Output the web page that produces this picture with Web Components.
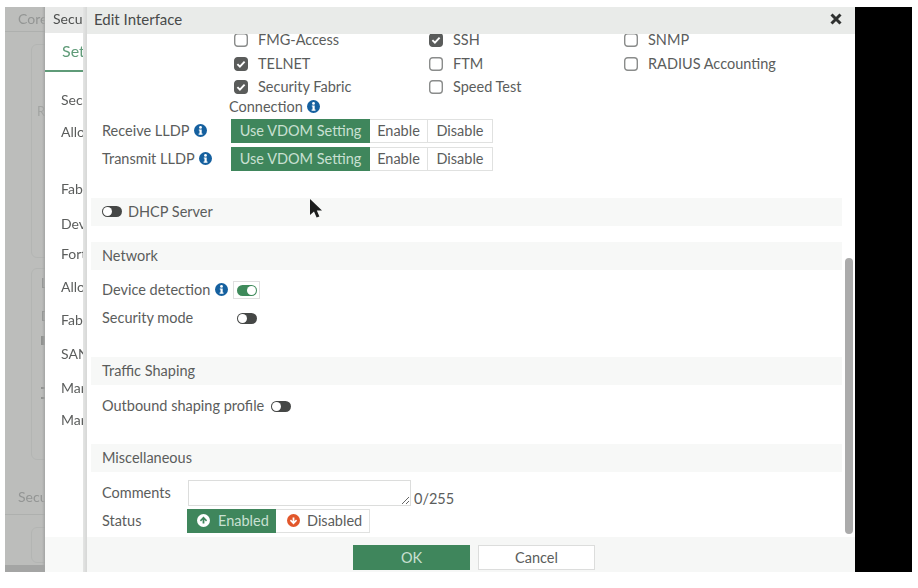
<!DOCTYPE html>
<html>
<head>
<meta charset="utf-8">
<title>Edit Interface</title>
<style>
  html, body { margin: 0; background: #fff; }
  body { font: 14.5px Lato, "Liberation Sans", sans-serif; color: #5b5d5c; }
</style>
</head>
<body>
<fgt-screen>
  <fgt-backdrop slot="back"></fgt-backdrop>
  <fgt-sidepanel slot="side"></fgt-sidepanel>
  <fgt-dialog slot="dialog" heading="Edit Interface">
    <fgt-checks>
      <fgt-check>FMG-Access</fgt-check>
      <fgt-check checked>SSH</fgt-check>
      <fgt-check>SNMP</fgt-check>
      <fgt-check checked>TELNET</fgt-check>
      <fgt-check>FTM</fgt-check>
      <fgt-check>RADIUS Accounting</fgt-check>
      <fgt-check checked>Security Fabric Connection <fgt-info></fgt-info></fgt-check>
      <fgt-check>Speed Test</fgt-check>
    </fgt-checks>

    <fgt-row label-width="129" gap="2" height="24">
      <span slot="label">Receive LLDP <fgt-info></fgt-info></span>
      <fgt-segment options="Use VDOM Setting:139|Enable:58|Disable:65"></fgt-segment>
    </fgt-row>
    <fgt-row label-width="129" gap="4" height="24">
      <span slot="label">Transmit LLDP <fgt-info></fgt-info></span>
      <fgt-segment options="Use VDOM Setting:139|Enable:58|Disable:65"></fgt-segment>
    </fgt-row>

    <fgt-band gap="27"><fgt-toggle></fgt-toggle><span>DHCP Server</span></fgt-band>

    <fgt-band gap="16">Network</fgt-band>
    <fgt-row label-width="131" gap="11" height="18">
      <span slot="label">Device detection <fgt-info></fgt-info></span>
      <fgt-toggle on boxed></fgt-toggle>
    </fgt-row>
    <fgt-row label-width="135" gap="10" height="18">
      <span slot="label">Security mode</span>
      <fgt-toggle></fgt-toggle>
    </fgt-row>

    <fgt-band gap="30">Traffic Shaping</fgt-band>
    <fgt-row label-width="169" gap="12" height="18">
      <span slot="label">Outbound shaping profile</span>
      <fgt-toggle></fgt-toggle>
    </fgt-row>

    <fgt-band gap="29">Miscellaneous</fgt-band>
    <fgt-row label-width="86" gap="8" height="26">
      <span slot="label">Comments</span>
      <fgt-comment limit="255"></fgt-comment>
    </fgt-row>
    <fgt-row label-width="85" gap="3" height="24">
      <span slot="label">Status</span>
      <fgt-status></fgt-status>
    </fgt-row>

    <fgt-button slot="footer" primary>OK</fgt-button>
    <fgt-button slot="footer">Cancel</fgt-button>
  </fgt-dialog>
  <fgt-cursor slot="cursor"></fgt-cursor>
</fgt-screen>

<script>
class Screen extends HTMLElement {
  constructor() {
    super();
    this.attachShadow({ mode: "open" });
    this.shadowRoot.innerHTML = `
      <style>
        :host { display: block; padding: 7px 6px 16px 5px; }
        #frame { position: relative; display: flex; height: 565px; overflow: hidden; filter: blur(0.55px); }
        #edge { width: 57px; flex: none; background: #000; }
        #cursor { position: absolute; left: 304px; top: 192px; }
        ::slotted([slot=dialog]) { flex: 1; min-width: 0; }
      </style>
      <div id="frame">
        <slot name="back"></slot>
        <slot name="side"></slot>
        <slot name="dialog"></slot>
        <div id="edge"></div>
        <div id="cursor"><slot name="cursor"></slot></div>
      </div>
    `;
  }
}

class Backdrop extends HTMLElement {
  constructor() {
    super();
    this.attachShadow({ mode: "open" });
    this.shadowRoot.innerHTML = `
      <style>
        :host { display: flex; flex-direction: column; flex: none; position: relative; width: 40px; height: 100%; overflow: hidden; background: #bcbdbb; color: #939594; font-size: 14px; }
        header { height: 25px; line-height: 24px; padding-left: 13px; border-bottom: 1px solid #aeb0ae; box-sizing: border-box; white-space: nowrap; }
        .card { margin-left: 26px; width: 40px; box-sizing: border-box; border: 1px solid #b3b5b3; border-radius: 6px; color: #a2a4a2; font-size: 13px; }
        .one { margin-top: 12px; height: 214px; padding: 58px 0 0 5px; }
        .two { margin-top: 10px; height: 192px; padding: 6px 0 0 9px; color: #8b8d8c; }
        .two div { height: 33px; }
        .two i { display: block; width: 5px; background: #8f918f; }
        .two i.block { height: 9px; margin: -5px 0 42px; }
        .two i.tick { height: 2px; margin-bottom: 8px; }
        h4 { margin: 27px 0 0; height: 28px; font: inherit; line-height: 20px; padding-left: 13px; border-bottom: 1px solid #aeb0ae; box-sizing: border-box; }
        .three { margin-top: 12px; height: 36px; }
        footer { margin-top: auto; height: 7px; background: #a4a5a4; }
        #shade { position: absolute; right: 0; top: 0; bottom: 0; width: 3px; background: linear-gradient(to right, transparent, #a3a4a3); }
      </style>
      <header>Core</header>
      <div class="card one">R</div>
      <div class="card two"><div>L</div><div>D</div><i class="block"></i><i class="tick"></i><i class="tick"></i></div>
      <h4>Secu</h4>
      <div class="card three"></div>
      <footer></footer>
      <div id="shade"></div>
    `;
  }
}

class SidePanel extends HTMLElement {
  constructor() {
    super();
    this.attachShadow({ mode: "open" });
    const gaps = [["Secu", 18], ["Allo", 12], ["Fab", 37], ["Dev", 15], ["Fort", 10], ["Allo", 13], ["Fab", 13], ["SAN", 14], ["Mar", 14], ["Mar", 12]];
    this.shadowRoot.innerHTML = `
      <style>
        :host { display: flex; flex-direction: column; flex: none; position: relative; width: 42px; height: 100%; overflow: hidden; background: #fff; color: #5b5d5c; font-size: 14px; }
        header { height: 26px; line-height: 24px; padding-left: 8px; background: #e8e9e8; color: #4e504f; white-space: nowrap; }
        #tab { height: 39px; box-sizing: border-box; padding: 8px 0 0 17px; border-bottom: 2px solid #5f9b78; color: #5f9b78; font-size: 16px; line-height: 20px; }
        p { margin: 0; padding-left: 16px; line-height: 20px; white-space: nowrap; }
        footer { margin-top: auto; height: 35px; background: #f8f9f8; }
        #shade { position: absolute; right: 0; top: 0; bottom: 0; width: 4px; background: linear-gradient(to right, #e4e5e4, #d6d7d6); }
      </style>
      <header>Secur</header>
      <div id="tab">Set</div>
      ${gaps.map(([t, g]) => `<p style="margin-top:${g}px">${t}</p>`).join("")}
      <footer></footer>
      <div id="shade"></div>
    `;
  }
}

class Dialog extends HTMLElement {
  constructor() {
    super();
    this.attachShadow({ mode: "open" });
    this.shadowRoot.innerHTML = `
      <style>
        :host { display: flex; flex-direction: column; height: 100%; background: #fff; }
        header { position: relative; z-index: 1; display: flex; align-items: center; justify-content: space-between; flex: none; height: 27px; box-sizing: border-box; padding: 0 13px 4px 7px; background: #e9ebe9; color: #484a49; font-size: 15px; }
        #main { flex: 1; min-height: 0; display: flex; overflow: hidden; }
        #scroll { flex: 1; min-width: 0; }
        #gutter { flex: none; width: 8px; padding: 0 2px 0 3px; }
        #thumb { margin-top: 224px; height: 276px; border-radius: 4px; background: #ababab; }
        footer { display: flex; justify-content: center; gap: 8px; flex: none; height: 35px; box-sizing: border-box; padding: 8px 0 2px 6px; background: #f6f7f6; }
      </style>
      <header>
        <span id="title"></span>
        <svg width="12" height="12" viewBox="0 0 12 12"><path d="M1.5 1.5l9 9m0-9l-9 9" stroke="#2f3130" stroke-width="3" fill="none"/></svg>
      </header>
      <div id="main">
        <div id="scroll"><slot></slot></div>
        <div id="gutter"><div id="thumb"></div></div>
      </div>
      <footer><slot name="footer"></slot></footer>
    `;
    this.shadowRoot.querySelector("#title").textContent = this.getAttribute("heading");
  }
}

class Checks extends HTMLElement {
  constructor() {
    super();
    this.attachShadow({ mode: "open" });
    this.shadowRoot.innerHTML = `
      <style>
        :host { display: grid; grid-template-columns: repeat(3, 195px); row-gap: 3.5px; margin: -4px 0 2px 142px; line-height: 20px; }
      </style>
      <slot></slot>
    `;
  }
}

class Check extends HTMLElement {
  constructor() {
    super();
    this.attachShadow({ mode: "open" });
    const mark = this.hasAttribute("checked")
      ? `<rect x=".7" y=".7" width="12.6" height="12.6" rx="3" fill="#5a5c5b" stroke="#5a5c5b" stroke-width="1.4"/><path d="M3.4 7.2l2.5 2.5 4.7-5" fill="none" stroke="#fff" stroke-width="1.9"/>`
      : `<rect x=".7" y=".7" width="12.6" height="12.6" rx="3" fill="#fff" stroke="#8a8c8b" stroke-width="1.4"/>`;
    this.shadowRoot.innerHTML = `
      <style>
        :host { display: block; max-width: 170px; }
        svg { vertical-align: -2px; margin: 0 10px 0 5px; }
      </style>
      <svg width="14" height="14" viewBox="0 0 14 14">${mark}</svg><slot></slot>
    `;
  }
}

class Info extends HTMLElement {
  constructor() {
    super();
    this.attachShadow({ mode: "open" });
    this.shadowRoot.innerHTML = `
      <style>
        :host { display: inline-block; width: 13px; height: 13px; vertical-align: -1px; margin-left: 1px; }
        svg { display: block; }
      </style>
      <svg width="13" height="13" viewBox="0 0 13 13">
        <circle cx="6.5" cy="6.5" r="6.5" fill="#15609f"/>
        <circle cx="6.5" cy="3.4" r="1.4" fill="#fff"/>
        <path d="M4.8 5.4h2.9v4.1h.8v1.2H4.6V9.5h.9V6.6h-.7z" fill="#fff"/>
      </svg>
    `;
  }
}

class Row extends HTMLElement {
  constructor() {
    super();
    this.attachShadow({ mode: "open" });
    this.shadowRoot.innerHTML = `
      <style>
        :host { display: flex; align-items: center; margin: ${this.getAttribute("gap")}px 0 0 15px; height: ${this.getAttribute("height")}px; }
        #label { flex: none; width: ${this.getAttribute("label-width")}px; padding-bottom: 1px; white-space: nowrap; }
      </style>
      <div id="label"><slot name="label"></slot></div>
      <slot></slot>
    `;
  }
}

class Band extends HTMLElement {
  constructor() {
    super();
    this.attachShadow({ mode: "open" });
    this.shadowRoot.innerHTML = `
      <style>
        :host { display: flex; align-items: center; gap: 6px; margin: ${this.getAttribute("gap")}px 0 0 4px; height: 28px; box-sizing: border-box; padding: 0 0 1px 11px; background: #f7f8f7; }
      </style>
      <slot></slot>
    `;
  }
}

class Segment extends HTMLElement {
  constructor() {
    super();
    this.attachShadow({ mode: "open" });
    const options = this.getAttribute("options").split("|").map((o) => o.split(":"));
    this.shadowRoot.innerHTML = `
      <style>
        :host { display: inline-flex; height: 24px; }
        span { display: flex; align-items: center; justify-content: center; padding-bottom: 1px; box-sizing: border-box; border: 1px solid #e0e1e0; border-left: 0; background: #fff; white-space: nowrap; }
        span.active { border: 0; background: #3f865c; color: #c9e0d2; }
      </style>
      ${options.map(([text, width], i) => `<span class="${i === 0 ? "active" : ""}" style="width:${width}px">${text}</span>`).join("")}
    `;
  }
}

class Toggle extends HTMLElement {
  constructor() {
    super();
    this.attachShadow({ mode: "open" });
    const on = this.hasAttribute("on");
    const boxed = this.hasAttribute("boxed");
    this.shadowRoot.innerHTML = `
      <style>
        :host { display: inline-flex; align-items: center; justify-content: center; flex: none; box-sizing: border-box; ${boxed ? "width: 27px; height: 18px; border: 1px solid #e0dfe0;" : ""} }
        #pill { display: flex; align-items: center; justify-content: ${on ? "flex-end" : "flex-start"}; width: 20px; height: 11px; padding: 0 1px; box-sizing: border-box; border-radius: 6px; background: ${on ? "#3f8a5b" : "#454746"}; }
        #knob { width: 9px; height: 9px; border-radius: 50%; background: #fff; }
      </style>
      <div id="pill"><div id="knob"></div></div>
    `;
  }
}

class Comment extends HTMLElement {
  constructor() {
    super();
    this.attachShadow({ mode: "open" });
    this.shadowRoot.innerHTML = `
      <style>
        :host { display: flex; align-items: flex-end; gap: 3px; }
        textarea { display: block; width: 223px; height: 26px; box-sizing: border-box; margin: 0; padding: 2px 4px; border: 1px solid #dcdddc; background: #fff; font: inherit; resize: both; }
        span { line-height: 16px; margin-bottom: -1px; }
      </style>
      <textarea></textarea><span>0/${this.getAttribute("limit")}</span>
    `;
  }
}

class Status extends HTMLElement {
  constructor() {
    super();
    this.attachShadow({ mode: "open" });
    this.shadowRoot.innerHTML = `
      <style>
        :host { display: inline-flex; height: 24px; }
        span { display: flex; align-items: center; box-sizing: border-box; padding-bottom: 1px; }
        #up { gap: 8px; width: 89px; padding-left: 10px; background: #3f865c; color: #c9e0d2; }
        #down { gap: 7px; width: 94px; padding-left: 11px; border: 1px solid #e0e1e0; border-left: 0; background: #fff; }
        svg { flex: none; }
      </style>
      <span id="up">
        <svg width="13" height="13" viewBox="0 0 13 13"><circle cx="6.5" cy="6.5" r="6.5" fill="#fff"/><path d="M6.5 2.6l3.6 3.7-1.1 1.1-1.6-1.6v3.8H5.6V5.8L4 7.4 2.9 6.3z" fill="#3f865c"/></svg>
        Enabled
      </span>
      <span id="down">
        <svg width="13" height="13" viewBox="0 0 13 13"><circle cx="6.5" cy="6.5" r="6.5" fill="#e2572b"/><path d="M6.5 10.4L2.9 6.7 4 5.6l1.6 1.6V3.4h1.8v3.8L9 5.6l1.1 1.1z" fill="#fff"/></svg>
        Disabled
      </span>
    `;
  }
}

class Button extends HTMLElement {
  constructor() {
    super();
    this.attachShadow({ mode: "open" });
    const primary = this.hasAttribute("primary");
    this.shadowRoot.innerHTML = `
      <style>
        :host { display: flex; align-items: center; justify-content: center; width: 117px; height: 25px; box-sizing: border-box; ${primary ? "background: #3f865c; color: #c9e0d2;" : "background: #fff; border: 1px solid #dcdddc;"} }
      </style>
      <slot></slot>
    `;
  }
}

class Cursor extends HTMLElement {
  constructor() {
    super();
    this.attachShadow({ mode: "open" });
    this.shadowRoot.innerHTML = `
      <style>
        :host { display: block; }
        svg { display: block; }
      </style>
      <svg width="14" height="22" viewBox="0 0 14 22"><path d="M1 0v16l4-3.6 2.6 6.2 2.8-1.2-2.6-6h5.2z" fill="#1d1e1e"/></svg>
    `;
  }
}

customElements.define("fgt-screen", Screen);
customElements.define("fgt-backdrop", Backdrop);
customElements.define("fgt-sidepanel", SidePanel);
customElements.define("fgt-dialog", Dialog);
customElements.define("fgt-checks", Checks);
customElements.define("fgt-check", Check);
customElements.define("fgt-info", Info);
customElements.define("fgt-row", Row);
customElements.define("fgt-band", Band);
customElements.define("fgt-segment", Segment);
customElements.define("fgt-toggle", Toggle);
customElements.define("fgt-comment", Comment);
customElements.define("fgt-status", Status);
customElements.define("fgt-button", Button);
customElements.define("fgt-cursor", Cursor);
</script>
</body>
</html>
